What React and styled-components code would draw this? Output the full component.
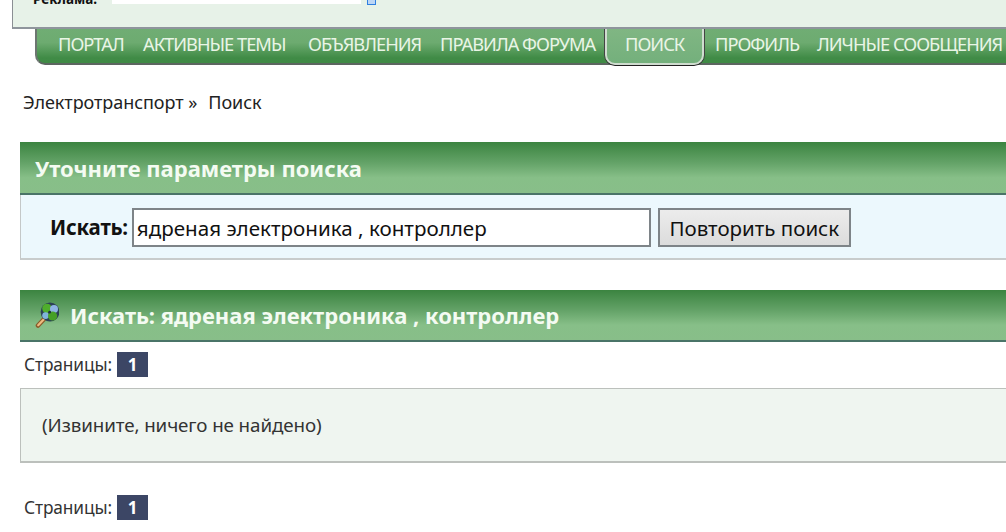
import styled, { createGlobalStyle } from "styled-components";

const GlobalStyle = createGlobalStyle`
  html, body {
    margin: 0;
    padding: 0;
    background: #fff;
    overflow: hidden;
  }
  body {
    font-family: "Noto Sans", "Open Sans", sans-serif;
  }
`;

const menuItems = [
  { label: "ПОРТАЛ", width: 85 },
  { label: "АКТИВНЫЕ ТЕМЫ", width: 165 },
  { label: "ОБЪЯВЛЕНИЯ", width: 132 },
  { label: "ПРАВИЛА ФОРУМА", width: 178 },
  { label: "ПОИСК", width: 99, active: true },
  { label: "ПРОФИЛЬ", width: 102 },
  { label: "ЛИЧНЫЕ СООБЩЕНИЯ", width: 200 },
];

const KeyIcon = () => (
  <svg width="24" height="26" viewBox="0 0 24 26">
    <path d="M3 23.5 L11 15" stroke="#8a5a2a" strokeWidth="4.6" strokeLinecap="round" />
    <path d="M3.2 23.2 L10.5 15.5" stroke="#eebb80" strokeWidth="2.2" strokeLinecap="round" />
    <circle cx="15" cy="10" r="9.4" fill="#2c4256" />
    <circle cx="12" cy="6.5" r="4.8" fill="#4fae2c" />
    <circle cx="19" cy="7" r="4" fill="#8fb4e4" />
    <circle cx="10.6" cy="13.6" r="3.4" fill="#7fb4dc" />
    <circle cx="17.6" cy="14" r="4.6" fill="#46a026" />
    <circle cx="14.6" cy="10.2" r="1.4" fill="#1d2f3d" />
  </svg>
);

const Pages = () => (
  <PagesRow>
    Страницы: <PageNumber>1</PageNumber>
  </PagesRow>
);

const App = () => {
  return (
    <Page>
      <GlobalStyle />
      <TopPanel>
        <AdLabel>Реклама:</AdLabel>
        <AdInput />
        <AdIcon />
      </TopPanel>
      <Menu>
        {menuItems.map((item) => (
          <MenuItem key={item.label} $width={item.width} $active={item.active}>
            {item.label}
          </MenuItem>
        ))}
      </Menu>
      <Breadcrumb>
        <span>Электротранспорт »</span>
        <span>Поиск</span>
      </Breadcrumb>
      <Content>
        <CatBar>Уточните параметры поиска</CatBar>
        <SearchBox>
          <SearchLabel>Искать:</SearchLabel>
          <SearchInput defaultValue="ядреная электроника , контроллер" />
          <SearchButton>Повторить поиск</SearchButton>
        </SearchBox>
        <ResultBar>
          <KeyIcon />
          Искать: ядреная электроника , контроллер
        </ResultBar>
        <TopPages>
          <Pages />
        </TopPages>
        <NoResults>(Извините, ничего не найдено)</NoResults>
        <BottomPages>
          <Pages />
        </BottomPages>
      </Content>
    </Page>
  );
};

const Page = styled.div`
  width: 1006px;
  height: 532px;
  overflow: hidden;
  background: #fff;
  color: #333;
`;

const TopPanel = styled.div`
  box-sizing: border-box;
  width: 1100px;
  height: 29px;
  margin-left: 12px;
  padding-left: 20px;
  display: flex;
  align-items: flex-start;
  overflow: hidden;
  background: #e7f2e8;
  border-left: 1px solid #8b8f94;
  border-bottom: 2px solid #8f959c;
`;

const AdLabel = styled.span`
  width: 79px;
  margin-top: -10px;
  font-size: 13.5px;
  font-weight: 700;
  line-height: 18px;
  color: #111;
`;

const AdInput = styled.div`
  width: 249px;
  height: 4px;
  background: #fff;
`;

const AdIcon = styled.div`
  box-sizing: border-box;
  width: 9px;
  height: 5px;
  margin-left: 6px;
  border: 1px solid #2f7fe0;
  border-top: none;
  background: #bcd6f5;
`;

const Menu = styled.div`
  box-sizing: border-box;
  width: 1100px;
  height: 36px;
  margin-left: 35px;
  padding-left: 8px;
  display: flex;
  align-items: flex-start;
  background: linear-gradient(#70ad74 0%, #6dab70 40%, #408b46 85%, #3f8a45 100%);
  border-left: 2px solid #6c7670;
  border-bottom: 2px solid #5c6660;
  border-bottom-left-radius: 10px;
`;

const MenuItem = styled.div`
  box-sizing: border-box;
  flex: none;
  width: ${({ $width }) => $width}px;
  height: ${({ $active }) => ($active ? "36px" : "30px")};
  line-height: 30px;
  padding-left: ${({ $active }) => ($active ? "18px" : "13px")};
  margin-right: ${({ $active }) => ($active ? "-2px" : "0")};
  font-size: 18.3px;
  letter-spacing: -1px;
  color: #e9f5e6;
  white-space: nowrap;
  ${({ $active }) =>
    $active &&
    `
    background: linear-gradient(#80b683, #74b07c);
    border: 2px solid #cfdccf;
    border-top: none;
    border-radius: 0 0 10px 10px;
    box-shadow: 0 1px 0 #222, -1px 0 0 #444, 1px 0 0 #444;
  `}
`;

const Breadcrumb = styled.div`
  display: flex;
  gap: 11px;
  margin: 24px 0 0 23px;
  font-size: 18px;
  line-height: 26px;
  letter-spacing: -0.05px;
  color: #222;
`;

const Content = styled.div`
  width: 1100px;
  margin: 27px 0 0 20px;
`;

const barStyles = `
  box-sizing: border-box;
  display: flex;
  align-items: center;
  padding-left: 15px;
  background: linear-gradient(#3b8440 0%, #63a267 40%, #87bf88 70%, #88be89 100%);
  font-weight: 700;
  font-size: 22px;
  color: #f4fbf2;
  white-space: nowrap;
`;

const CatBar = styled.div`
  ${barStyles}
  height: 53px;
  border-bottom: 2px solid #4a7468;
`;

const SearchBox = styled.div`
  box-sizing: border-box;
  height: 65px;
  padding: 13px 0 0 29px;
  display: flex;
  align-items: flex-start;
  background: #ecf8fd;
  border-left: 1px solid #c4c8c8;
  border-bottom: 2px solid #c8cccc;
`;

const SearchLabel = styled.span`
  font-weight: 700;
  font-size: 20.5px;
  line-height: 38px;
  color: #111;
  letter-spacing: -0.2px;
  margin-right: 4px;
`;

const SearchInput = styled.input`
  box-sizing: border-box;
  width: 519px;
  height: 39px;
  padding: 0 3px;
  border: 2px solid #7e8488;
  background: #fff;
  font-family: inherit;
  font-size: 20.6px;
  color: #111;
  outline: none;
`;

const SearchButton = styled.button`
  box-sizing: border-box;
  width: 193px;
  height: 39px;
  margin-left: 7px;
  padding: 0;
  border: 2px solid #7e8488;
  background: linear-gradient(#ececec, #dcdcdc);
  font-family: inherit;
  font-size: 20.5px;
  color: #111;
`;

const ResultBar = styled.div`
  ${barStyles}
  height: 52px;
  margin-top: 30px;
  gap: 11px;
  padding-left: 15px;
  border-bottom: 2px solid #4a7468;
`;

const TopPages = styled.div`
  margin-top: 10px;
`;

const PagesRow = styled.div`
  display: flex;
  align-items: center;
  gap: 5px;
  height: 25px;
  padding-left: 4px;
  font-size: 17.3px;
  letter-spacing: -0.1px;
  color: #333;
`;

const PageNumber = styled.span`
  width: 31px;
  height: 25px;
  display: flex;
  align-items: center;
  justify-content: center;
  background: #3c4665;
  color: #fff;
  font-weight: 700;
  font-size: 17px;
`;

const NoResults = styled.div`
  box-sizing: border-box;
  height: 75px;
  margin-top: 11px;
  padding-left: 21px;
  display: flex;
  align-items: center;
  background: #eff5f0;
  border: 1px solid #bcc0bc;
  border-width: 1px 0 2px 1px;
  font-size: 18.8px;
  letter-spacing: -0.1px;
  color: #333;
`;

const BottomPages = styled.div`
  margin-top: 32px;
`;

export default App;
